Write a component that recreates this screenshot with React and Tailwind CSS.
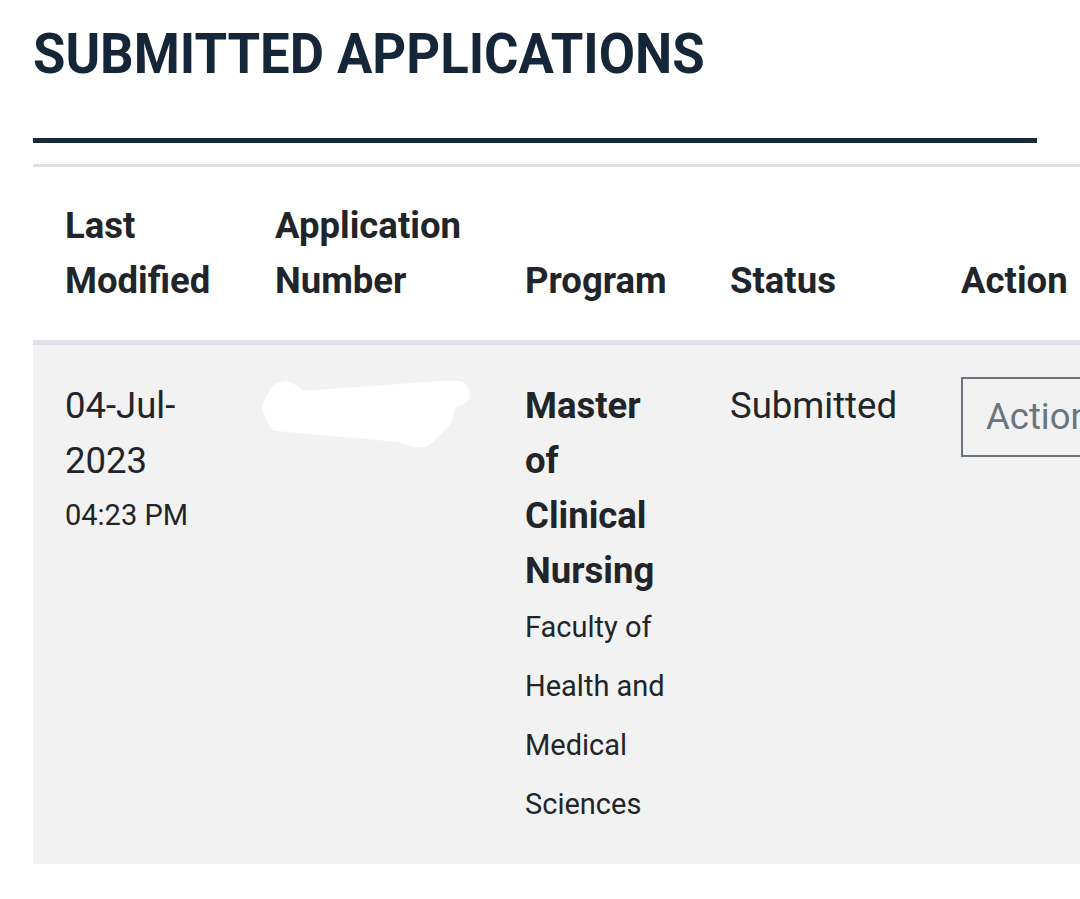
export default function App() {
  const headCell = "px-8 pt-[31px] pb-[32px]";
  const bodyCell = "px-8 pt-[33px] pb-[30px]";
  return (
    <div
      className="min-h-screen w-[1080px] overflow-hidden bg-white text-[#212529]"
      style={{ fontFamily: "Roboto, 'Noto Sans', sans-serif" }}
    >
      <div className="pl-[33px] pt-[22px]">
        <h1 className="origin-left scale-x-[0.94] whitespace-nowrap text-[56px] font-bold uppercase leading-[64px] text-[#142638]">
          Submitted Applications
        </h1>
        <div className="mt-[52px] h-[5px] w-[1004px] bg-[#172a3a]" />

        <table className="mt-[21px] w-[1150px] table-fixed border-collapse border-t-[3px] border-[#dee2e6]">
          <colgroup>
            <col className="w-[210px]" />
            <col className="w-[250px]" />
            <col className="w-[205px]" />
            <col className="w-[231px]" />
            <col className="w-[254px]" />
          </colgroup>
          <thead>
            <tr className="border-b-[5px] border-[#dee2e6] text-left align-bottom text-[36.5px] font-bold leading-[55px]">
              <th className={headCell}>Last Modified</th>
              <th className={headCell}>Application Number</th>
              <th className={headCell}>Program</th>
              <th className={headCell}>Status</th>
              <th className={headCell}>Action</th>
            </tr>
          </thead>
          <tbody>
            <tr className="bg-[#f2f2f2] align-top text-[36.5px] leading-[55px]">
              <td className={bodyCell}>
                <div>04-Jul-2023</div>
                <div className="text-[29px] leading-[55px]">04:23 PM</div>
              </td>
              <td className="px-8 pt-[32px] pb-[31px]">
                {/* blanked-out application number */}
                <svg
                  width="216"
                  height="74"
                  viewBox="0 0 216 74"
                  className="-ml-[17px] block"
                >
                  <path
                    d="M14 30 L22 16 L28 14 L44 24 L182 14 L200 14 L202 18 L190 22 L184 42 L174 52 L166 60 L158 60 L142 55 L62 48 L20 44 Z"
                    fill="#ffffff"
                    stroke="#ffffff"
                    strokeWidth="20"
                    strokeLinejoin="round"
                  />
                </svg>
              </td>
              <td className={bodyCell}>
                <div className="font-bold">Master of Clinical Nursing</div>
                <div className="text-[29px] leading-[59px]">
                  Faculty of Health and Medical Sciences
                </div>
              </td>
              <td className={bodyCell}>Submitted</td>
              <td className="pt-[32px] pb-[31px] pl-8 pr-0">
                <button className="whitespace-nowrap border-2 border-[#6c757d] bg-transparent px-[23px] py-[11px] text-left text-[36.5px] leading-[54px] text-[#6c757d]">
                  Action
                </button>
              </td>
            </tr>
          </tbody>
        </table>
      </div>
    </div>
  );
}
